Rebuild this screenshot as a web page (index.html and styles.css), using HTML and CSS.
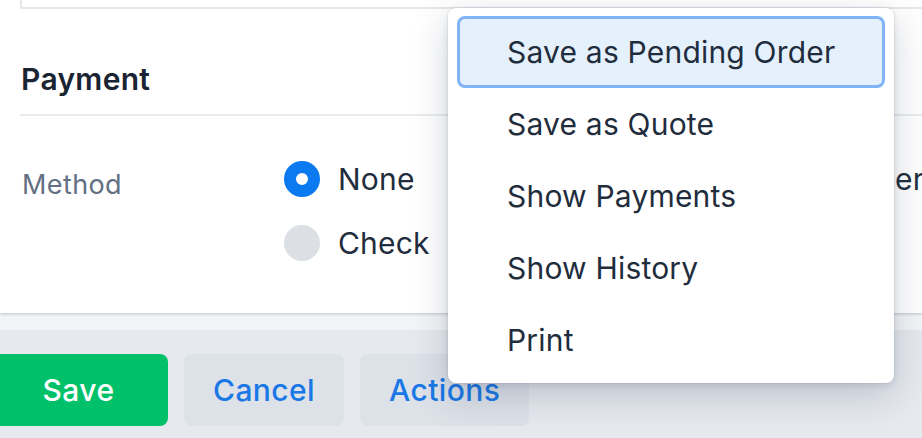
FILE: index.html
```html
<!DOCTYPE html>
<html lang="en">
<head>
<meta charset="utf-8">
<title>Payment</title>
<link rel="stylesheet" href="styles.css">
</head>
<body>
<div class="page">
  <section class="card">
    <div class="prev-box"></div>
    <h2 class="section-title">Payment</h2>
    <div class="field">
      <div class="field-label">Method</div>
      <div class="radio-group">
        <label class="radio"><span class="dot checked"></span><span class="radio-text">None</span></label>
        <label class="radio"><span class="dot"></span><span class="radio-text">Other</span></label>
        <label class="radio"><span class="dot"></span><span class="radio-text">Check</span></label>
      </div>
    </div>
  </section>
  <footer class="footer">
    <div class="btn-row">
      <button class="btn btn-save">Save</button>
      <button class="btn btn-secondary">Cancel</button>
      <button class="btn btn-secondary">Actions</button>
    </div>
  </footer>
  <div class="menu">
    <div class="menu-item active">Save as Pending Order</div>
    <div class="menu-item">Save as Quote</div>
    <div class="menu-item">Show Payments</div>
    <div class="menu-item">Show History</div>
    <div class="menu-item">Print</div>
  </div>
</div>
</body>
</html>
```
FILE: styles.css
```css
html, body {
  margin: 0;
  padding: 0;
}
body {
  width: 922px;
  height: 438px;
  overflow: hidden;
  background: #f2f4f6;
  font-family: Inter, "Noto Sans", sans-serif;
  color: #1f2d3d;
}
.page {
  position: relative;
  height: 438px;
}
.card {
  background: #ffffff;
  height: 313px;
  padding-left: 20px;
  box-sizing: border-box;
  box-shadow: 0 1px 3px rgba(60, 70, 90, 0.28);
  position: relative;
}
.prev-box {
  height: 7px;
  border-left: 2px solid #e6e8eb;
  border-bottom: 2px solid #e6e8eb;
}
.section-title {
  margin: 0;
  padding: 52px 0 17px 1px;
  font-size: 30px;
  line-height: 36px;
  font-weight: 600;
  letter-spacing: 0.3px;
  color: #1a2433;
  border-bottom: 2px solid #e9ebee;
}
.field {
  display: grid;
  grid-template-columns: 264px 1fr;
  padding-top: 45px;
}
.field-label {
  font-size: 27px;
  line-height: 36px;
  letter-spacing: 0.4px;
  color: #637083;
  padding-top: 6px;
  padding-left: 2px;
}
.radio-group {
  display: grid;
  grid-template-columns: 506px auto;
  grid-auto-rows: 64px;
}
.radio {
  display: flex;
  align-items: flex-start;
  gap: 18px;
  font-size: 30px;
  line-height: 36px;
  letter-spacing: 0.2px;
  color: #1f2d3d;
}
.dot {
  width: 36px;
  height: 36px;
  border-radius: 50%;
  background: #dcdfe4;
  box-sizing: border-box;
  flex: none;
}
.dot.checked {
  background: #ffffff;
  border: 12px solid #0b7af0;
}
.footer {
  margin-top: 17px;
  background: #e6e9ee;
  height: 108px;
  padding-top: 24px;
  box-sizing: border-box;
}
.btn-row {
  display: flex;
  gap: 16px;
  margin-left: -11px;
}
.btn {
  height: 72px;
  border: none;
  border-radius: 8px;
  font-family: Inter, "Noto Sans", sans-serif;
  font-size: 30px;
  font-weight: 500;
  letter-spacing: 0.4px;
  padding: 0 29px;
}
.btn-save {
  width: 179px;
  background: #00c16a;
  color: #ffffff;
}
.btn-secondary {
  background: #dde1e8;
  color: #1a78e6;
}
.menu {
  position: absolute;
  left: 448px;
  top: 8px;
  width: 446px;
  box-sizing: border-box;
  padding: 8px 9px 7px;
  background: #ffffff;
  border-radius: 8px;
  box-shadow: 0 12px 36px rgba(40, 55, 80, 0.22), 0 2px 6px rgba(40, 55, 80, 0.12), 0 0 0 1px rgba(40, 55, 80, 0.05);
}
.menu-item {
  height: 72px;
  display: flex;
  align-items: center;
  padding-left: 50px;
  font-size: 30px;
  letter-spacing: 0.2px;
  color: #1f2d3d;
  border-radius: 8px;
  box-sizing: border-box;
}
.menu-item.active {
  background: #e5f0fd;
  border: 3px solid #80b4f5;
  padding-left: 47px;
}
```
